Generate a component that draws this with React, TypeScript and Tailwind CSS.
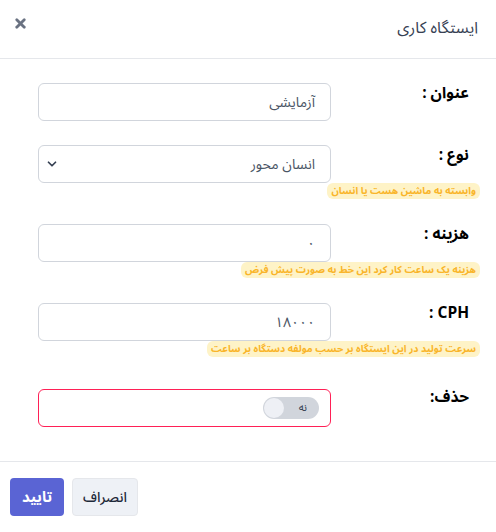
import { X, ChevronDown } from "lucide-react";

interface Row {
  label: string;
  value: string;
  hint?: string;
  select?: boolean;
}

const rows: Row[] = [
  { label: "عنوان :", value: "آزمایشی" },
  { label: "نوع :", value: "انسان محور", select: true, hint: "وابسته به ماشین هست یا انسان" },
  { label: "هزینه :", value: "۰", hint: "هزینه یک ساعت کار کرد این خط به صورت پیش فرض" },
  { label: "CPH :", value: "۱۸۰۰۰", hint: "سرعت تولید در این ایستگاه بر حسب مولفه دستگاه بر ساعت" },
];

const font = { fontFamily: '"Noto Sans Arabic", "DejaVu Sans", sans-serif' };

export default function App() {
  return (
    <div dir="rtl" style={font} className="w-[496px] h-[532px] bg-white text-gray-800 flex flex-col">
      {/* Header */}
      <div className="h-[59px] flex items-center justify-between border-b border-gray-200 pr-[18px] pl-[13px] shrink-0">
        <h2 className="text-[16px] text-gray-700 -mt-[2px]">ایستگاه کاری</h2>
        <X className="w-[15px] h-[15px] text-gray-500 -mt-[11px]" strokeWidth={4.5} />
      </div>

      {/* Body */}
      <div className="flex-1 pt-6 pr-4 pl-[38px]">
        {rows.map((row, i) => (
          <div key={i} className={i === 0 ? "" : row.hint && rows[i - 1].hint ? "mt-[25px]" : "mt-6"}>
            <div className="flex items-start">
              <label className="w-[149px] pr-[11px] -mt-[1px] text-[15.5px] font-bold text-black shrink-0">
                {row.label}
              </label>
              <div className="w-[293px] h-[38px] border border-gray-300 rounded-md flex items-center justify-between pr-[15px] pl-[6px] text-[14px] text-gray-600">
                <span>{row.value}</span>
                {row.select && <ChevronDown className="w-[14px] h-[14px] text-gray-700" strokeWidth={3} />}
              </div>
            </div>
            {row.hint && (
              <div className="flex">
                <span className="bg-[#fef3c7] text-[#f9b52a] text-[10px] font-bold rounded-md px-[4px] leading-[16px] h-4">
                  {row.hint}
                </span>
              </div>
            )}
          </div>
        ))}

        <div className="flex items-start mt-8">
          <label className="w-[149px] pr-[11px] -mt-[3px] text-[15.5px] font-bold text-black shrink-0">حذف:</label>
          <div className="w-[293px] h-[38px] border border-rose-500 rounded-md flex items-center pr-[11px]">
            <div className="w-14 h-[22px] bg-gray-300 rounded-full flex items-center justify-between pr-[12px] pl-[1px]">
              <span className="text-[11px] text-gray-700">نه</span>
              <span className="w-5 h-5 rounded-full bg-[#eef0f5]" />
            </div>
          </div>
        </div>
      </div>

      {/* Footer */}
      <div className="h-[71px] border-t border-gray-200 flex items-start justify-end gap-2 pt-[16px] pl-[10px] shrink-0">
        <button className="w-[66px] h-[38px] bg-[#eef1f6] border border-gray-200 rounded-[4px] text-[14px] text-gray-800 font-medium">
          انصراف
        </button>
        <button className="w-[54px] h-[38px] bg-[#5a64d4] rounded-[4px] text-[15px] text-white font-bold">
          تایید
        </button>
      </div>
    </div>
  );
}
